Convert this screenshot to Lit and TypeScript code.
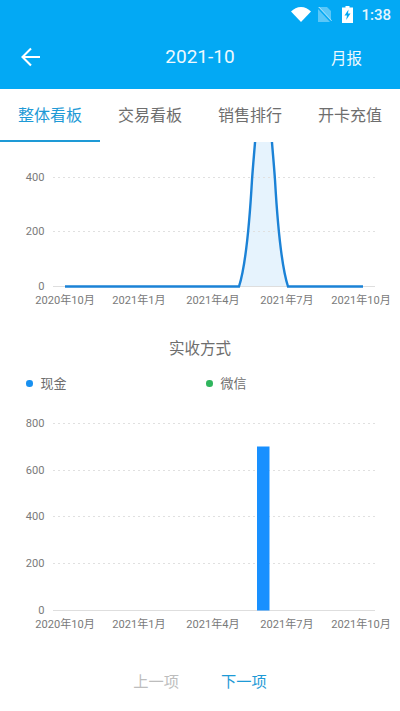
import { LitElement, html, css, svg } from "lit";
import { customElement } from "lit/decorators.js";

const XLABELS: [number, string][] = [
  [65, "2020年10月"],
  [139, "2021年1月"],
  [213, "2021年4月"],
  [287, "2021年7月"],
  [361, "2021年10月"],
];

function axes(ticks: [number, string][], axisY: number) {
  return svg`
    ${ticks.map(([y, label]) => svg`
      <text class="tick" x="44.500" y=${y + 3.5} text-anchor="end">${label}</text>
      ${label === "0"
        ? svg`<line class="axis" x1="53" x2="375" y1=${y + 0.5} y2=${y + 0.5}></line>`
        : svg`<line class="grid" x1="53" x2="375" y1=${y + 0.5} y2=${y + 0.5}></line>`}
    `)}
    ${XLABELS.map(([x, label]) => svg`
      <text class="tick" x=${x} y=${axisY + 17.5} text-anchor="middle">${label}</text>
    `)}
  `;
}

@customElement("app-root")
export class AppRoot extends LitElement {
  static styles = css`
    :host {
      display: block;
      width: 400px;
      height: 711px;
      overflow: hidden;
      background: #fff;
      font-family: Roboto, "Noto Sans CJK SC", sans-serif;
      color: #666;
    }
    .head {
      background: #03a9f4;
      color: #fff;
      height: 89px;
      display: flex;
      flex-direction: column;
    }
    .status {
      height: 29px;
      display: flex;
      align-items: center;
      justify-content: flex-end;
      padding-right: 9px;
      font-size: 15px;
      font-weight: 500;
      color: #e3f5fe;
    }
    .status svg { display: block; }
    .clock { margin-left: 8px; }
    .bar {
      flex: 1;
      display: grid;
      grid-template-columns: 80px 1fr 80px;
      align-items: center;
      padding-bottom: 5px;
    }
    .back { display: block; margin-left: 19px; }
    .title { text-align: center; font-size: 19px; color: #eef9fe; }
    .report { font-size: 15.5px; text-align: left; padding-left: 11px; color: #eef9fe; }
    .tabs {
      height: 53px;
      display: grid;
      grid-template-columns: repeat(4, 100px);
    }
    .tab {
      display: flex;
      align-items: center;
      justify-content: center;
      font-size: 16px;
      color: #6e6e6e;
      border-bottom: 2px solid transparent;
      box-sizing: border-box;
      padding-bottom: 2px;
      white-space: nowrap;
    }
    .tab.on { color: #1e9ad6; border-bottom-color: #1e9ad6; }
    svg.chart { display: block; }
    .tick {
      font-size: 11.100px;
      fill: #7a7a7a;
      font-family: Roboto, "Noto Sans CJK SC", sans-serif;
    }
    .grid { stroke: #e0e0e0; stroke-width: 1; stroke-dasharray: 2 3; }
    .axis { stroke: #dedede; stroke-width: 1; }
    .section {
      text-align: center;
      font-size: 15.500px;
      line-height: 22px;
      color: #6e6e6e;
      padding-top: 14px;
    }
    .legend {
      display: grid;
      grid-template-columns: 180px 1fr;
      padding: 14px 0 0 26px;
      font-size: 13px;
      line-height: 19px;
      color: #6e6e6e;
    }
    .item { display: flex; align-items: center; gap: 8px; }
    .dot { width: 6.500px; height: 6.500px; border-radius: 50%; }
    .pager {
      display: flex;
      justify-content: center;
      gap: 42px;
      padding-top: 35px;
      font-size: 15.250px;
      line-height: 22px;
    }
    .prev { color: #bdbdbd; }
    .next { color: #1e9ad6; }
  `;

  render() {
    return html`
      <div class="head">
        <div class="status">
          <svg width="20" height="15" viewBox="0 0 20 15"><path d="M0 4.500C2.700 1.800 6.200 0 10 0s7.300 1.800 10 4.500L10 15z" fill="#fff"/></svg>
          <svg style="margin-left:7px" width="14" height="15" viewBox="0 0 14 15">
            <path d="M0 0h9l4 4v11H0z" fill="#fff" opacity=".35"/>
            <path d="M0 1l13 14" stroke="#03a9f4" stroke-width="1.400"/>
            <path d="M1 0l13 14" stroke="#fff" stroke-opacity=".45" stroke-width="1"/>
          </svg>
          <svg style="margin-left:10px" width="11" height="17" viewBox="0 0 11 17">
            <path d="M3.500 0h4v1.500H11V17H0V1.500h3.500z" fill="#fff"/>
            <path d="M6.500 3.500 2.500 9.500h2.500l-.8 4.500 4.300-6.500H6z" fill="#03a9f4"/>
          </svg>
          <span class="clock">1:38</span>
        </div>
        <div class="bar">
          <svg class="back" width="24" height="24" viewBox="0 0 24 24" fill="none" stroke="#fff" stroke-width="2.100">
            <path d="M21 12H4M12 3.500 3.500 12l8.500 8.500"/>
          </svg>
          <div class="title">2021-10</div>
          <div class="report">月报</div>
        </div>
      </div>
      <div class="tabs">
        <div class="tab on">整体看板</div>
        <div class="tab">交易看板</div>
        <div class="tab">销售排行</div>
        <div class="tab">开卡充值</div>
      </div>
      <svg class="chart" width="400" height="182" viewBox="0 142 400 182">
        <path d="M239 286.500C245 268 249 232 252 180C253 165 254.500 150 256 130H271C272.500 150 274 165 275 180C278 232 282 268 288 286.500Z" fill="#e6f3fd"/>
        ${axes([[177, "400"], [231, "200"], [286, "0"]], 286)}
        <path d="M65 286.500H239C245 268 249 232 252 180C253 165 254.500 150 256 130M271 130C272.500 150 274 165 275 180C278 232 282 268 288 286.500H363" fill="none" stroke="#1b82d6" stroke-width="2.400"/>
      </svg>
      <div class="section">实收方式</div>
      <div class="legend">
        <div class="item"><span class="dot" style="background:#1890f0"></span>现金</div>
        <div class="item"><span class="dot" style="background:#2fb55d"></span>微信</div>
      </div>
      <svg class="chart" width="400" height="243" viewBox="0 393 400 243">
        ${axes([[423, "800"], [470, "600"], [516, "400"], [563, "200"], [610, "0"]], 610)}
        <rect x="257" y="446.500" width="12.500" height="164" fill="#1890ff"/>
      </svg>
      <div class="pager">
        <span class="prev">上一项</span>
        <span class="next">下一项</span>
      </div>
    `;
  }
}
